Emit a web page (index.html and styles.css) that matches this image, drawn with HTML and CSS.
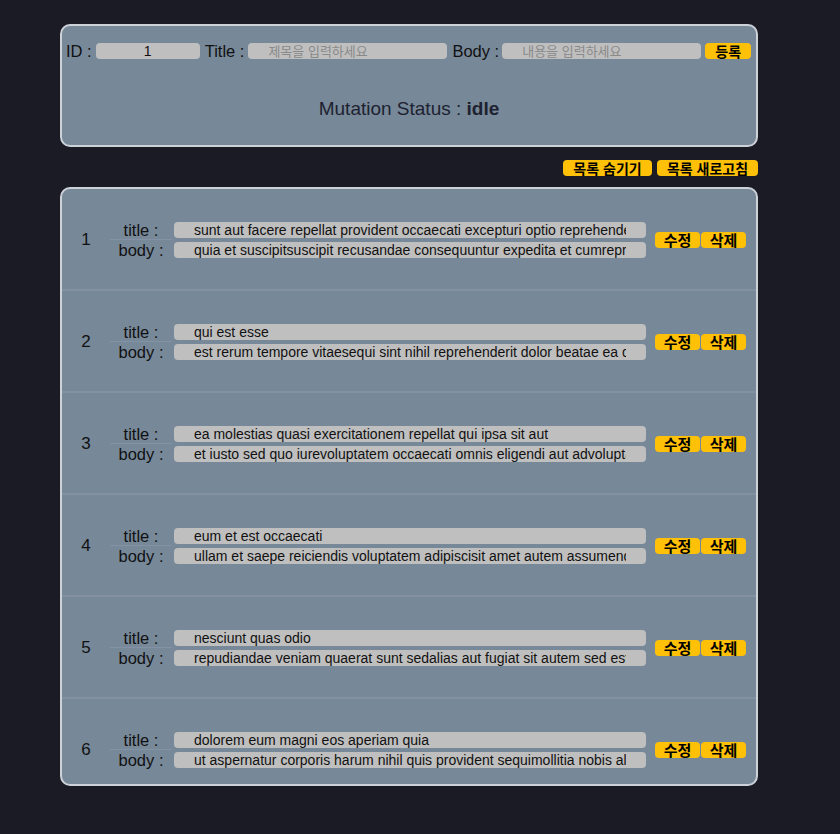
FILE: index.html
```html
<!DOCTYPE html>
<html lang="ko">
<head>
<meta charset="utf-8">
<title>Posts</title>
<link rel="stylesheet" href="styles.css">
</head>
<body>
<div class="wrap">
  <section class="form-card">
    <div class="form-row">
      <label class="lbl">ID :</label>
      <input class="inp inp-id" type="text" value="1">
      <label class="lbl">Title :</label>
      <input class="inp inp-wide" type="text" placeholder="제목을 입력하세요">
      <label class="lbl lbl-body">Body :</label>
      <input class="inp inp-wide" type="text" placeholder="내용을 입력하세요">
      <button class="btn btn-submit">등록</button>
    </div>
    <p class="status">Mutation Status : <b>idle</b></p>
  </section>

  <div class="toolbar">
    <button class="btn btn-tool">목록 숨기기</button>
    <button class="btn btn-tool">목록 새로고침</button>
  </div>

  <section class="list-card">
    <div class="row">
      <div class="num">1</div>
      <div class="labels"><span class="l-title">title :</span><span>body :</span></div>
      <div class="fields">
        <input class="inp field" type="text" value="sunt aut facere repellat provident occaecati excepturi optio reprehenderit">
        <input class="inp field" type="text" value="quia et suscipitsuscipit recusandae consequuntur expedita et cumreprehenderit molestiae ut ut quas totam">
      </div>
      <div class="actions"><button class="btn btn-act">수정</button><button class="btn btn-act">삭제</button></div>
    </div>
    <div class="row">
      <div class="num">2</div>
      <div class="labels"><span class="l-title">title :</span><span>body :</span></div>
      <div class="fields">
        <input class="inp field" type="text" value="qui est esse">
        <input class="inp field" type="text" value="est rerum tempore vitaesequi sint nihil reprehenderit dolor beatae ea dolores neque">
      </div>
      <div class="actions"><button class="btn btn-act">수정</button><button class="btn btn-act">삭제</button></div>
    </div>
    <div class="row">
      <div class="num">3</div>
      <div class="labels"><span class="l-title">title :</span><span>body :</span></div>
      <div class="fields">
        <input class="inp field" type="text" value="ea molestias quasi exercitationem repellat qui ipsa sit aut">
        <input class="inp field" type="text" value="et iusto sed quo iurevoluptatem occaecati omnis eligendi aut advoluptatem doloribus vel accusantium">
      </div>
      <div class="actions"><button class="btn btn-act">수정</button><button class="btn btn-act">삭제</button></div>
    </div>
    <div class="row">
      <div class="num">4</div>
      <div class="labels"><span class="l-title">title :</span><span>body :</span></div>
      <div class="fields">
        <input class="inp field" type="text" value="eum et est occaecati">
        <input class="inp field" type="text" value="ullam et saepe reiciendis voluptatem adipiscisit amet autem assumenda provident rerum culpa">
      </div>
      <div class="actions"><button class="btn btn-act">수정</button><button class="btn btn-act">삭제</button></div>
    </div>
    <div class="row">
      <div class="num">5</div>
      <div class="labels"><span class="l-title">title :</span><span>body :</span></div>
      <div class="fields">
        <input class="inp field" type="text" value="nesciunt quas odio">
        <input class="inp field" type="text" value="repudiandae veniam quaerat sunt sedalias aut fugiat sit autem sed est">
      </div>
      <div class="actions"><button class="btn btn-act">수정</button><button class="btn btn-act">삭제</button></div>
    </div>
    <div class="row">
      <div class="num">6</div>
      <div class="labels"><span class="l-title">title :</span><span>body :</span></div>
      <div class="fields">
        <input class="inp field" type="text" value="dolorem eum magni eos aperiam quia">
        <input class="inp field" type="text" value="ut aspernatur corporis harum nihil quis provident sequimollitia nobis aliquid molestiae">
      </div>
      <div class="actions"><button class="btn btn-act">수정</button><button class="btn btn-act">삭제</button></div>
    </div>
  </section>
</div>
</body>
</html>
```

FILE: styles.css
```css
html, body {
  margin: 0;
  padding: 0;
  background: #1b1b26;
}

body {
  font-family: "Liberation Sans", Arial, "Noto Sans CJK KR", sans-serif;
  color: #111;
}

.wrap {
  width: 698px;
  margin-left: 60px;
  padding-top: 24px;
}

.form-card {
  box-sizing: border-box;
  height: 123px;
  background: #778899;
  border: 2px solid #cdd1d8;
  border-radius: 10px;
  padding: 17px 4px 0;
}

.form-row {
  display: flex;
  align-items: center;
  height: 16px;
}

.lbl {
  font-size: 16.5px;
  line-height: 16px;
  margin-right: 4px;
  white-space: nowrap;
}

.lbl-body {
  margin-right: 3px;
}

.inp {
  box-sizing: border-box;
  height: 16px;
  border: none;
  outline: none;
  border-radius: 4px;
  background: #bfbfbf;
  font-family: "Liberation Sans", Arial, "Noto Sans CJK KR", sans-serif;
  font-size: 14px;
  color: #111;
  padding: 0 20px;
  margin: 0;
}

.inp::placeholder {
  color: #8a8a8a;
  font-family: "Noto Sans CJK KR", sans-serif;
  font-size: 13px;
}

.inp-id {
  width: 104px;
  text-align: center;
  padding: 0 4px;
  margin-right: 5px;
}

.inp-wide {
  width: 199px;
  margin-right: 5px;
}

.inp-wide:last-of-type {
  margin-right: 4px;
}

.btn {
  box-sizing: border-box;
  height: 16px;
  border: none;
  border-radius: 4px;
  background: #ffc107;
  color: #000;
  font-family: "Noto Sans CJK KR", sans-serif;
  font-weight: 700;
  font-size: 14px;
  line-height: 16px;
  padding: 0;
  margin: 0;
  cursor: pointer;
  white-space: nowrap;
}

.btn-submit {
  width: 46px;
}

.status {
  margin: 38px 0 0;
  text-align: center;
  font-size: 19px;
  line-height: 24px;
  color: #1e2230;
  font-weight: 400;
}

.status b {
  font-weight: 700;
}

.toolbar {
  display: flex;
  justify-content: flex-end;
  gap: 5px;
  margin-top: 13px;
  height: 16px;
}

.btn-tool:first-child {
  width: 89px;
}

.btn-tool:last-child {
  width: 101px;
}

.list-card {
  box-sizing: border-box;
  margin-top: 11px;
  height: 599px;
  background: #778899;
  border: 2px solid #cdd1d8;
  border-radius: 10px;
  overflow: hidden;
}

.row {
  box-sizing: border-box;
  display: flex;
  align-items: center;
  height: 102px;
  padding-top: 2px;
  border-bottom: 2px solid #8391a3;
}

.num {
  width: 48px;
  text-align: center;
  font-size: 17px;
}

.labels {
  width: 62px;
  display: flex;
  flex-direction: column;
  align-items: center;
  font-size: 16.5px;
  margin-right: 2px;
}

.labels span {
  height: 20px;
  line-height: 20px;
}

.l-title {
  align-self: stretch;
  text-align: center;
  border-bottom: 1px solid rgba(140, 154, 172, 0.6);
  height: 19px !important;
}

.fields {
  display: flex;
  flex-direction: column;
  gap: 4px;
  width: 472px;
}

.field {
  width: 472px;
}

.actions {
  display: flex;
  gap: 1px;
  margin-left: 9px;
}

.btn-act {
  width: 45px;
  font-size: 15px;
}
```
